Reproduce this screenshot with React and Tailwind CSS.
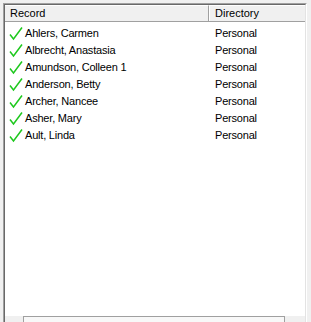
import React from "react";

const records = [
  "Ahlers, Carmen",
  "Albrecht, Anastasia",
  "Amundson, Colleen 1",
  "Anderson, Betty",
  "Archer, Nancee",
  "Asher, Mary",
  "Ault, Linda",
];

const Check = () => (
  <svg width="14" height="15" viewBox="0 0 14 15" className="shrink-0">
    <path d="M1 8.5 L4.5 13 L13 1.5" fill="none" stroke="#1ec81e" strokeWidth="1.5" />
  </svg>
);

export default function App() {
  return (
    <div
      className="w-[311px] h-[322px] bg-[#f0f0f0] overflow-hidden pl-[3px] pt-[3px] text-[11px] text-black"
      style={{ fontFamily: '"Liberation Sans", Arial, sans-serif' }}
    >
      <div className="w-[304px] h-[330px] border-t border-l border-r border-t-[#a0a0a0] border-l-[#a0a0a0] border-r-white">
        <div className="h-full flex flex-col border-t border-l border-r border-t-[#696969] border-l-[#696969] border-r-[#e3e3e3] bg-white">
          <div className="flex h-[17px] bg-[#f0f0f0] border-b border-[#a0a0a0]">
            <div className="w-[204px] h-full border-r border-[#a0a0a0] border-t border-t-white flex items-center pl-[5px]">
              Record
            </div>
            <div className="w-[96px] h-full border-l border-l-white border-t border-t-white flex items-center pl-[5px]">
              Directory
            </div>
          </div>
          <div className="h-[295px] pt-[3px]">
            {records.map((name) => (
              <div key={name} className="flex h-[17px] items-center">
                <div className="w-[205px] flex items-center pl-[4px] gap-[2px]">
                  <Check />
                  <span className="tracking-[-0.2px]">{name}</span>
                </div>
                <div className="pl-[5px] tracking-[-0.2px]">Personal</div>
              </div>
            ))}
          </div>
          <div className="flex h-[17px] bg-[#f0f0f0]">
            <div className="w-[18px] h-full" />
            <div className="flex-1 h-full border-t border-l border-r border-[#a0a0a0] bg-[#f8f8f8]" />
            <div className="w-[20px] h-full" />
          </div>
        </div>
      </div>
    </div>
  );
}
